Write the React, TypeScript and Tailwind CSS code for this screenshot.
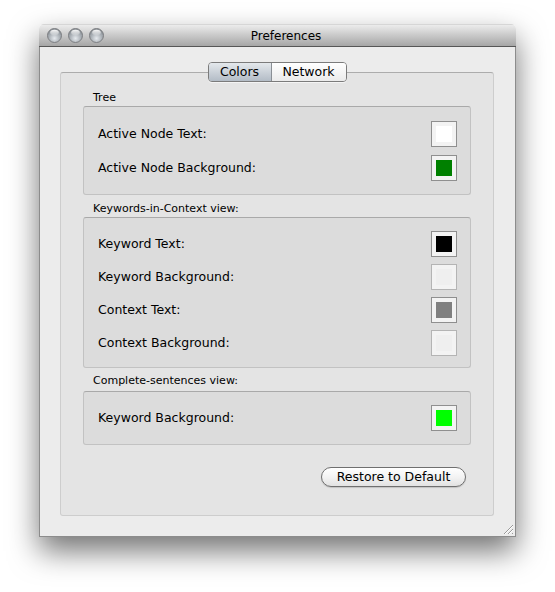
import React from "react";

const font = { fontFamily: '"DejaVu Sans", "Liberation Sans", sans-serif' };

function Light() {
  return (
    <svg width="15" height="15" viewBox="0 0 15 15">
      <defs>
        <radialGradient id="lg" cx="50%" cy="70%" r="60%">
          <stop offset="0%" stopColor="#e6eaee" />
          <stop offset="60%" stopColor="#aeb4ba" />
          <stop offset="100%" stopColor="#8c9298" />
        </radialGradient>
        <linearGradient id="hl" x1="0" y1="0" x2="0" y2="1">
          <stop offset="0%" stopColor="#ffffff" stopOpacity="0.95" />
          <stop offset="100%" stopColor="#ffffff" stopOpacity="0.1" />
        </linearGradient>
      </defs>
      <circle cx="7.5" cy="7.5" r="7" fill="url(#lg)" stroke="#7d7f82" strokeWidth="1" />
      <ellipse cx="7.5" cy="4.6" rx="4.3" ry="2.8" fill="url(#hl)" />
    </svg>
  );
}

function Well({ color, dim }: { color: string; dim?: boolean }) {
  return (
    <div
      className={`w-[26px] h-[26px] border ${dim ? "border-[#b4b4b4]" : "border-[#8f8f8f]"} bg-[#f3f3f3] flex items-center justify-center`}
    >
      <div className="w-[16px] h-[16px]" style={{ backgroundColor: color }} />
    </div>
  );
}

function Row({ label, color, dim }: { label: string; color: string; dim?: boolean }) {
  return (
    <div className="h-[26px] flex items-center justify-between pl-[14px] pr-[13px]">
      <span className="text-[12.5px] text-black">{label}</span>
      <Well color={color} dim={dim} />
    </div>
  );
}

function Group({ children, className }: { children: React.ReactNode; className: string }) {
  return (
    <div
      className={`bg-[#dcdcdc] border border-[#c2c2c2] border-t-[#a9a9a9] rounded-[3px] flex flex-col ${className}`}
    >
      {children}
    </div>
  );
}

export default function App() {
  return (
    <div className="w-[555px] h-[592px] bg-white pt-[24px] pl-[39px]" style={font}>
      <div className="w-[477px] h-[513px] flex flex-col rounded-t-[5px] overflow-hidden shadow-[0_14px_30px_rgba(0,0,0,0.55)]">
        <div className="h-[23px] shrink-0 flex items-center bg-gradient-to-b from-[#ececec] to-[#a6a6a6] border-b border-[#565656] border-t border-t-[#d6d6d6] relative">
          <div className="flex items-center gap-[6px] pl-[8px] absolute left-0 top-[3px]">
            <Light />
            <Light />
            <Light />
          </div>
          <div className="flex-1 text-center pl-[17px] text-[12px] text-black">Preferences</div>
        </div>
        <div className="flex-1 bg-[#ececec] border-x border-b border-[#8c8c8c] flex flex-col items-center pl-[20px] pr-[21px] pt-[15px] pb-[20px] relative">
          <div className="relative z-10 flex h-[20px] rounded-[4px] border border-[#7b7b7b] overflow-hidden text-[12.5px] text-black shadow-[0_1px_0_rgba(255,255,255,0.6)]">
            <div className="w-[63px] flex items-center justify-center bg-gradient-to-b from-[#e4e8ec] to-[#b3bcc6] border-r border-[#8a8f95]">
              Colors
            </div>
            <div className="w-[74px] flex items-center justify-center bg-gradient-to-b from-[#ffffff] to-[#ebebeb]">
              Network
            </div>
          </div>
          <div className="-mt-[10px] w-[434px] flex-1 bg-[#e4e4e4] border border-[#cdcdcd] border-t-[#acacac] rounded-[3px] flex flex-col px-[22px] pt-[18px]">
            <div className="h-[15px] leading-[14px] text-[11px] pl-[10px] text-black">Tree</div>
            <Group className="pt-[14px] pb-[13px] gap-[8px]">
              <Row label="Active Node Text:" color="#ffffff" />
              <Row label="Active Node Background:" color="#008000" />
            </Group>
            <div className="mt-[7px] h-[15px] leading-[14px] text-[11px] pl-[10px] text-black">
              Keywords-in-Context view:
            </div>
            <Group className="pt-[13px] pb-[11px] gap-[7px]">
              <Row label="Keyword Text:" color="#000000" />
              <Row label="Keyword Background:" color="#efefef" dim />
              <Row label="Context Text:" color="#808080" />
              <Row label="Context Background:" color="#efefef" dim />
            </Group>
            <div className="mt-[6px] h-[17px] leading-[14px] text-[11px] pl-[10px] text-black">
              Complete-sentences view:
            </div>
            <Group className="pt-[13px] pb-[13px]">
              <Row label="Keyword Background:" color="#00ff00" />
            </Group>
            <div className="flex justify-end mt-[22px] pr-[5px]">
              <div className="w-[145px] h-[20px] rounded-full border border-[#6f6f6f] bg-gradient-to-b from-[#ffffff] via-[#f3f3f3] to-[#e2e2e2] flex items-center justify-center text-[12.5px] text-black shadow-[0_1px_1px_rgba(0,0,0,0.15)]">
                Restore to Default
              </div>
            </div>
          </div>
          <svg className="absolute right-[1px] bottom-[1px]" width="12" height="12" viewBox="0 0 12 12">
            <path d="M11 2 L2 11 M11 6 L6 11 M11 10 L10 11" stroke="#9a9a9a" strokeWidth="1" />
            <path d="M11 3 L3 11 M11 7 L7 11" stroke="#ffffff" strokeWidth="1" />
          </svg>
        </div>
      </div>
    </div>
  );
}
